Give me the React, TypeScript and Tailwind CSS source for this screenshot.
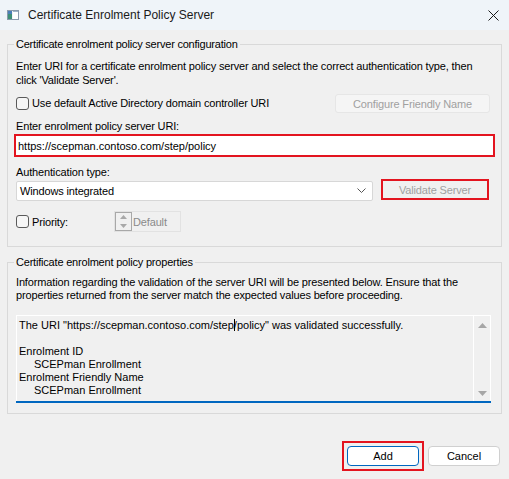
import React from 'react';

function Checkbox() {
  return <span className="inline-block w-[13px] h-[13px] rounded-[3px] border border-[#5a5a5a] bg-[#f6f6f6] shrink-0" />;
}

function WindowIcon() {
  return (
    <svg width="12" height="10" viewBox="0 0 12 10">
      <rect x="0.5" y="0.5" width="11" height="9" fill="#f4f4f4" stroke="#8a9aab" />
      <rect x="1" y="1" width="4" height="8" fill="#3f8f78" />
      <rect x="1" y="1" width="4" height="3" fill="#4c7fb8" />
      <rect x="6" y="1" width="5" height="8" fill="#ffffff" />
      <rect x="6" y="1" width="5" height="1" fill="#9fb3c8" />
    </svg>
  );
}

export default function App() {
  return (
    <div
      className="w-[509px] h-[479px] bg-[#f0f0f0] text-[11px] text-black flex flex-col overflow-hidden"
      style={{ fontFamily: '"Liberation Sans", Arial, sans-serif' }}
    >
      {/* Title bar */}
      <div className="h-[30px] bg-[#eff4f9] flex items-center pl-[7px] pr-[8px] shrink-0">
        <WindowIcon />
        <span className="ml-[9px] text-[12px] text-[#1a1a1a]">Certificate Enrolment Policy Server</span>
        <span className="ml-auto w-[16px] h-[16px] flex items-center justify-center">
          <svg width="11" height="11" viewBox="0 0 11 11">
            <path d="M0.5 0.5 L10.5 10.5 M10.5 0.5 L0.5 10.5" stroke="#1a1a1a" strokeWidth="1" />
          </svg>
        </span>
      </div>

      {/* Configuration group */}
      <fieldset className="mx-[7px] mt-[7px] border border-[#d9d9d9] px-[8px] pb-[14px] leading-[14px] tracking-[-0.15px]">
        <legend className="px-[2px] -ml-[2px] tracking-[-0.22px]">Certificate enrolment policy server configuration</legend>
        <p className="mt-[8px]">
          Enter URI for a certificate enrolment policy server and select the correct authentication type, then
          <br />
          click &apos;Validate Server&apos;.
        </p>
        <div className="mt-[7px] flex items-start">
          <label className="flex items-center gap-[3px] mt-[2px]">
            <Checkbox />
            <span>Use default Active Directory domain controller URI</span>
          </label>
          <button className="ml-auto mr-[3px] w-[155px] h-[19px] rounded-[3px] bg-[#f5f5f5] border border-[#e6e6e6] text-[#a0a0a0] tracking-[-0.15px]">
            Configure Friendly Name
          </button>
        </div>
        <div className="mt-[6px]">Enter enrolment policy server URI:</div>
        <div className="mt-[1px] -mx-[2px] border-2 border-[#e3141f] tracking-normal">
          <div className="h-[19px] bg-white flex items-center px-[2px]">https://scepman.contoso.com/step/policy</div>
        </div>
        <div className="mt-[8px]">Authentication type:</div>
        <div className="mt-[2px] flex items-center">
          <div className="w-[357px] h-[20px] bg-white border border-[#d7d7d7] rounded-[2px] flex items-center pl-[3px] pr-[6px]">
            <span>Windows integrated</span>
            <svg className="ml-auto" width="9" height="6" viewBox="0 0 9 6">
              <path d="M0.5 0.5 L4.5 4.5 L8.5 0.5" fill="none" stroke="#555" strokeWidth="1" />
            </svg>
          </div>
          <div className="ml-[8px] border-2 border-[#e3141f] w-[108px] h-[21px] -mt-[3px] flex items-center justify-center text-[#a0a0a0]">
            Validate Server
          </div>
        </div>
        <div className="mt-[10px] flex items-center">
          <label className="flex items-center gap-[3px] w-[98px]">
            <Checkbox />
            <span>Priority:</span>
          </label>
          <div className="w-[67px] h-[21px] border border-[#e2e2e2] flex items-stretch">
            <div className="w-[17px] border border-[#a8a8a8] flex flex-col">
              <div className="flex-1 flex items-center justify-center">
                <svg width="7" height="4" viewBox="0 0 7 4"><path d="M0 4 L3.5 0 L7 4 Z" fill="#a8a8a8" /></svg>
              </div>
              <div className="flex-1 flex items-center justify-center">
                <svg width="7" height="4" viewBox="0 0 7 4"><path d="M0 0 L3.5 4 L7 0 Z" fill="#a8a8a8" /></svg>
              </div>
            </div>
            <span className="flex items-center pl-[1px] text-[#8a8a8a]">Default</span>
          </div>
        </div>
      </fieldset>

      {/* Properties group */}
      <fieldset className="mx-[7px] mt-[9px] border border-[#d9d9d9] px-[8px] pb-[10px] leading-[13px]">
        <legend className="px-[2px] -ml-[2px] tracking-[-0.2px]">Certificate enrolment policy properties</legend>
        <p className="mt-[7px] tracking-[-0.15px]">
          Information regarding the validation of the server URI will be presented below. Ensure that the
          <br />
          properties returned from the server match the expected values before proceeding.
        </p>
        <div className="mt-[13px] mr-[2px] h-[88px] border border-white border-b-0 flex relative">
          <div className="flex-1 pt-[3px] pl-[2px]">
            <div>
              The URI &quot;https://scepman.contoso.com/step<span className="border-l border-black -mr-[1px]" />/policy&quot; was validated successfully.
            </div>
            <div>&nbsp;</div>
            <div>Enrolment ID</div>
            <div className="pl-[15px]">SCEPman Enrollment</div>
            <div>Enrolment Friendly Name</div>
            <div className="pl-[15px]">SCEPman Enrollment</div>
          </div>
          <div className="w-[17px] border-l border-white flex flex-col items-center justify-between py-[7px]">
            <svg width="9" height="5" viewBox="0 0 9 5"><path d="M0 5 L4.5 0 L9 5 Z" fill="#a6a6a6" /></svg>
            <svg width="9" height="5" viewBox="0 0 9 5"><path d="M0 0 L4.5 5 L9 0 Z" fill="#a6a6a6" /></svg>
          </div>
          <div className="absolute left-[-1px] right-[-1px] bottom-0 h-[2px] bg-[#0067c0]" />
        </div>
      </fieldset>

      {/* Buttons */}
      <div className="mt-auto mb-[8px] flex justify-end items-center pr-[9px]">
        <div className="border-2 border-[#e3141f] p-[3px]">
          <button className="w-[72px] h-[20px] bg-white border border-[#0067c0] rounded-[4px]">Add</button>
        </div>
        <button className="ml-[4px] w-[72px] h-[20px] bg-white border border-[#d0d0d0] rounded-[4px]">Cancel</button>
      </div>
    </div>
  );
}
